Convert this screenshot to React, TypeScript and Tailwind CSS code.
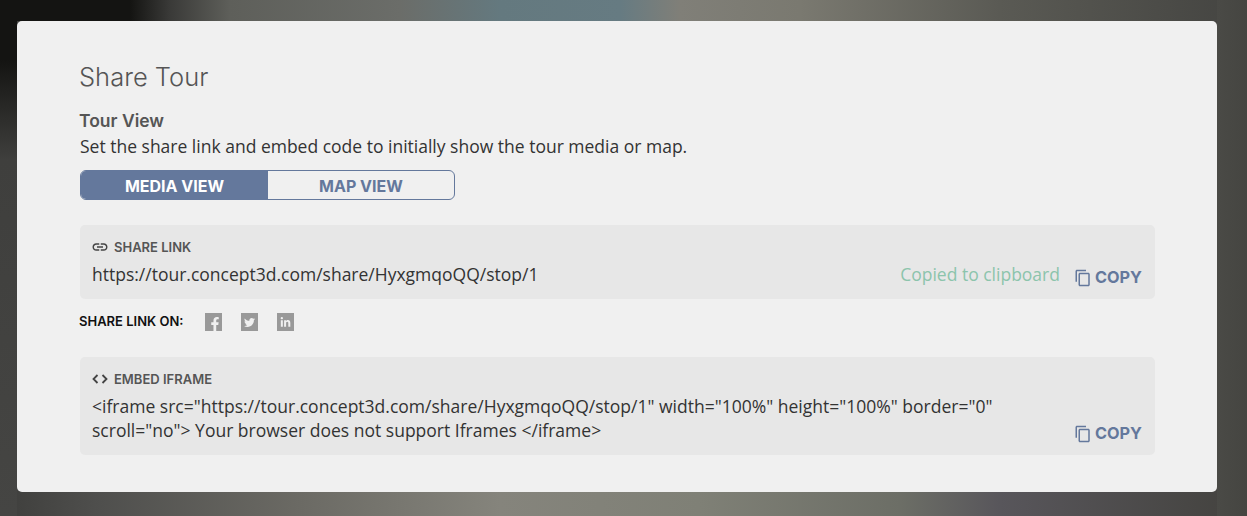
import React from "react";
import { MdLink, MdOutlineContentCopy } from "react-icons/md";
import { FaFacebookF, FaTwitter, FaLinkedinIn } from "react-icons/fa";

const heading = "font-['Inter',sans-serif]";

const CopyButton = () => (
  <button className={`flex items-center gap-[3px] text-[16.3px] leading-none font-bold text-[#64789c] ${heading}`}>
    <MdOutlineContentCopy className="w-[18px] h-[18px] -mb-[2px]" />
    COPY
  </button>
);

const SocialIcon = ({ children }: { children: React.ReactNode }) => (
  <a className="w-[17px] h-[18px] bg-[#999999] text-[#f0f0f0] flex items-center justify-center overflow-hidden">
    {children}
  </a>
);

const Label = ({ icon, text }: { icon: React.ReactNode; text: string }) => (
  <div className={`flex items-center text-[#555555] text-[13px] leading-[16px] font-semibold ${heading}`}>
    {icon}
    {text}
  </div>
);

export default function App() {
  return (
    <div className="h-[516px] w-[1247px] overflow-hidden pt-[21px] pl-[17px] font-['Open_Sans',sans-serif] [background:linear-gradient(180deg,#141412_0,#141412_60px,#3f3f3d_160px,#454543_516px)_left/17px_100%_no-repeat,linear-gradient(90deg,#4a4a46,#454541)_right/30px_100%_no-repeat,linear-gradient(90deg,#141412_0,#141412_130px,#3a3a38_170px,#5e5f5a_230px,#6b6d69_400px,#64797f_500px,#667b82_620px,#807f78_680px,#7a7970_800px,#5a5a54_1000px,#444441_1247px)_top/100%_21px_no-repeat,linear-gradient(90deg,#3e3e3c_0,#4f4f4d_100px,#6b6a64_300px,#85847c_500px,#7f8076_700px,#6c6e66_900px,#58565b_1000px,#43423e_1247px)]">
      <div className="w-[1200px] h-[471px] bg-[#f0f0f0] rounded-[5px] pl-[63px] pr-[62px] pt-[40px]">
        <h1 className={`-ml-[1px] text-[25.5px] leading-[32px] font-light text-[#555555] ${heading}`}>Share Tour</h1>

        <h2 className={`-ml-[1px] mt-[17px] text-[17.5px] leading-[22px] font-semibold text-[#555555] ${heading}`}>Tour View</h2>
        <p className="mt-[2px] text-[17.5px] leading-[24px] text-[#333333]">
          Set the share link and embed code to initially show the tour media or map.
        </p>

        <div className={`mt-[12px] flex w-[375px] h-[30px] rounded-[6px] border border-[#64789c] overflow-hidden text-[16px] font-bold ${heading}`}>
          <button className="w-[187px] pt-[2px] bg-[#64789c] text-white">MEDIA VIEW</button>
          <button className="flex-1 pt-[2px] text-[#64789c]">MAP VIEW</button>
        </div>

        <section className="mt-[25px] h-[74px] bg-[#e7e7e7] rounded-[5px] pl-[12px] pr-[13px] pt-[13px]">
          <Label icon={<MdLink className="w-[18px] h-[18px] -ml-[1px] mr-[5px] text-[#444444]" />} text="SHARE LINK" />
          <div className="mt-[6px] flex items-center justify-between">
            <span className="text-[17.5px] leading-[24px] text-[#333333]">https://tour.concept3d.com/share/HyxgmqoQQ/stop/1</span>
            <div className="flex items-center gap-[14px]">
              <span className="text-[17.5px] leading-[24px] text-[#8cc4ac]">Copied to clipboard</span>
              <div className="mt-[6px]">
                <CopyButton />
              </div>
            </div>
          </div>
        </section>

        <div className="mt-[14px] flex items-center h-[18px]">
          <span className={`w-[125px] -ml-[1px] mr-[1px] text-[13px] font-semibold text-[#111111] ${heading}`}>SHARE LINK ON:</span>
          <div className="flex gap-[19px]">
            <SocialIcon><FaFacebookF className="w-[14px] h-[14px] mt-[4px] ml-[3px]" /></SocialIcon>
            <SocialIcon><FaTwitter className="w-[11px] h-[11px]" /></SocialIcon>
            <SocialIcon><FaLinkedinIn className="w-[11px] h-[11px]" /></SocialIcon>
          </div>
        </div>

        <section className="mt-[26px] h-[98px] bg-[#e7e7e7] rounded-[5px] pl-[12px] pr-[13px] pt-[14px]">
          <Label
            icon={
              <svg viewBox="0 0 16 12" className="w-[16px] h-[12px] mr-[6px] text-[#444444]" fill="none" stroke="currentColor" strokeWidth="1.8">
                <path d="M5.5 2 1.5 6l4 4M10.5 2l4 4-4 4" />
              </svg>
            }
            text="EMBED IFRAME"
          />
          <div className="mt-[7px] flex items-end justify-between">
            <p className="w-[960px] text-[17.52px] leading-[24px] text-[#333333]">
              {'<iframe src="https://tour.concept3d.com/share/HyxgmqoQQ/stop/1" width="100%" height="100%" border="0" scroll="no"> Your browser does not support Iframes </iframe>'}
            </p>
            <div className="mb-[1px]">
              <CopyButton />
            </div>
          </div>
        </section>
      </div>
    </div>
  );
}
